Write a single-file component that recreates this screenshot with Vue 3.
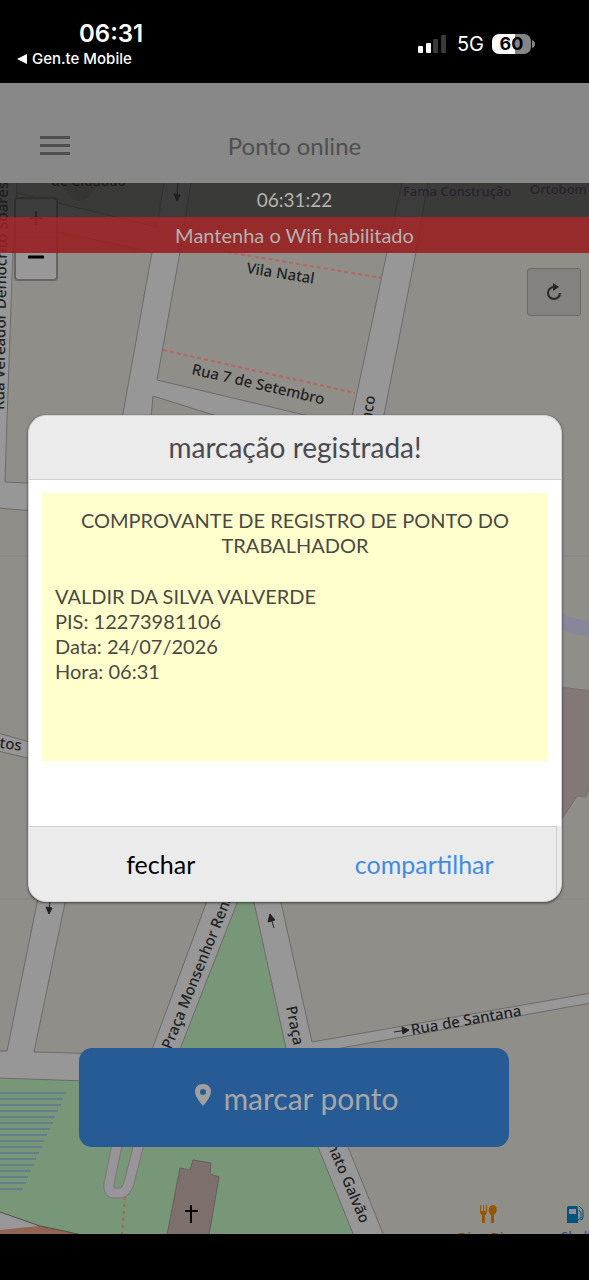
<template>
    <div class="phone">
        <header class="status">
            <div class="status-left">
                <span class="time">{{ data.time }}</span>
                <a class="back" href="#">
                    <svg width="10" height="10" viewBox="0 0 10 10"><path d="M0 5 L10 0 V10 Z" fill="#fff" /></svg>
                    Gen.te Mobile
                </a>
            </div>
            <div class="status-right">
                <svg width="28" height="20" viewBox="0 0 28 20">
                    <rect x="0" y="12" width="5" height="7" rx="1" fill="#fff" />
                    <rect x="8" y="9" width="5" height="10" rx="1" fill="#fff" />
                    <rect x="15" y="5" width="5" height="14" rx="1" fill="#3a3a3a" />
                    <rect x="23" y="1" width="5" height="18" rx="1" fill="#3a3a3a" />
                </svg>
                <span class="network">5G</span>
                <div class="battery">
                    <span class="level">60</span>
                    <svg width="3" height="8" viewBox="0 0 3 8"><path d="M0 0 Q3 1 3 4 T0 8 Z" fill="#858585" /></svg>
                </div>
            </div>
        </header>

        <main class="screen">
            <div class="navbar">
                <button class="menu" aria-label="Menu">
                    <span></span>
                    <span></span>
                    <span></span>
                </button>
                <h1>Ponto online</h1>
            </div>

            <div class="map-area">
                <svg class="map" viewBox="0 183 589 1051" preserveAspectRatio="xMidYMin slice">
                    <rect x="0" y="183" width="589" height="1051" fill="#908e88" />
                    <path d="M0 556 H589 M0 899 H589" stroke="#878580" fill="none" />

                    <!-- green areas -->
                    <path d="M235 900 H254 L286 1048 L353 1234 H0 V1078 L150 1082 L180 1048 Z" fill="#789778" />
                    <g stroke="#647f8c" stroke-width="2">
                        <line v-for="line in lakeLines" :key="line.y" x1="0" :y1="line.y" :x2="line.x" :y2="line.y" />
                    </g>

                    <!-- streets -->
                    <g fill="#979798" stroke="#6c6b6b" stroke-width="1">
                        <path d="M-2 182 H17 L13 250 L7 420 L5 482 L70 485 V514 L-2 508 Z" />
                        <path d="M17 193 L58 203 L157 227 L164 182 H191 L180 252 L157 380 L330 421 H233 L153 396 L150 430 H120 L152 252 L58 232 L15 224 Z" />
                        <path d="M402 182 H428 L416 252 L380 435 H348 L387 252 Z" />
                        <path d="M-2 733 L40 745 V761 L-2 751 Z" />
                        <path d="M38 898 H66 L34 1052 L150 1055 L208 898 H239 L175 1062 V1084 L-2 1078 V1051 H7 Z" />
                        <path d="M253 898 H280 L312 1042 L591 993 V1003 L330 1050 L318 1070 L348 1147 L384 1236 H354 L318 1147 L286 1048 Z" />
                    </g>
                    <path d="M555 619 Q575 628 595 630" stroke="#86879b" stroke-width="15" fill="none" />
                    <path d="M560 687 L591 691 V783 L586 797 L577 796 L560 822 Z" fill="#827875" stroke="#77706e" />
                    <path d="M60 183 H100 L90 196 Q82 204 72 199 Z" fill="#827c73" />

                    <g fill="none" stroke-linejoin="round">
                        <path d="M118 1140 L109 1184 Q108 1192 114 1193 L121 1193 Q126 1192 129 1183 L140 1140" stroke="#7b7775" stroke-width="11" />
                        <path d="M118 1140 L109 1184 Q108 1192 114 1193 L121 1193 Q126 1192 129 1183 L140 1140" stroke="#98949a" stroke-width="9" />
                        <path d="M125 1197 L122 1234" stroke="#9c6c50" stroke-width="2" stroke-dasharray="3 4" />
                        <path d="M227 252 L382 278 M163 350 L355 393" stroke="#b56564" stroke-width="2" stroke-dasharray="4 3" />
                    </g>
                    <path d="M0 1212 L40 1226 L0 1230 Z" fill="#98989a" />
                    <path d="M0 1230 L40 1226 L82 1235 H0 Z" fill="#946353" />
                    <path d="M0 1212 L40 1226 Q60 1230 82 1235" fill="none" stroke="#4d4d45" />
                    <path d="M180 1168 L190 1170 L193 1160 L211 1163 L210 1174 L219 1177 L209 1235 H167 Z" fill="#7d706c" stroke="#685d59" />
                    <path d="M191 1205 V1223 M185 1211 H198" stroke="#000" stroke-width="2" />

                    <!-- one way arrows -->
                    <g fill="#222" stroke="#222" stroke-width="1">
                        <path d="M178 183 L177 196 M174 194 L177 201 L180 195 Z" />
                        <path d="M50 902 L49 909 M46 907 L49 914 L52 908 Z" />
                        <path d="M274 928 L271 918 M268 922 L270 914 L275 920 Z" />
                        <path d="M394 1032 L407 1030 M402 1027 L409 1030 L403 1034 Z" />
                    </g>

                    <!-- labels -->
                    <g class="label">
                        <text
                            v-for="label in data.labels"
                            :key="label.text"
                            :class="label.type"
                            :transform="`translate(${label.x} ${label.y}) rotate(${label.angle})`"
                        >{{ label.text }}</text>
                    </g>

                    <!-- restaurant -->
                    <g transform="translate(480 1205)" fill="#945600">
                        <path d="M0 0 H1 V6 H3 V0 H4 V6 H6 V0 H7 V7 Q7 9 5 10 V18 H2 V10 Q0 9 0 7 Z" />
                        <path d="M13 0 C17 0 18 6 15 9 L14 10 V18 H11 V10 C7 7 9 0 13 0 Z" />
                    </g>
                    <!-- fuel -->
                    <g transform="translate(567 1205)">
                        <path d="M2 1 H9 Q11 1 11 3 V18 H0 V3 Q0 1 2 1 Z" fill="#00557e" />
                        <rect x="2" y="4" width="7" height="5" fill="#908e98" />
                        <path d="M11 15 L14 13 V8 L12 5 M12 1 L16 5 V12 Q16 15 13 15" fill="none" stroke="#00557e" stroke-width="1" />
                    </g>
                </svg>

                <div class="zoom-control">
                    <button aria-label="Aumentar zoom">
                        <svg width="14" height="14" viewBox="0 0 14 14"><path d="M0 7 H14 M7 0 V14" stroke="#444" stroke-width="2" /></svg>
                    </button>
                    <button aria-label="Diminuir zoom">
                        <svg width="16" height="4" viewBox="0 0 16 4"><path d="M1 2 H15" stroke="#000" stroke-width="3" stroke-linecap="round" /></svg>
                    </button>
                </div>

                <div class="clock">06:31:22</div>
                <div class="warning">Mantenha o Wifi habilitado</div>
                <button class="refresh" aria-label="Atualizar">
                    <svg width="16" height="18" viewBox="0 0 16 18">
                        <path d="M14 10 A6 6 0 1 1 8 4" fill="none" stroke="#272727" stroke-width="2" />
                        <path d="M7 0 L13 4 L7 8 Z" fill="#272727" />
                    </svg>
                </button>

                <button class="mark">
                    <svg width="16" height="22" viewBox="0 0 16 22">
                        <path fill-rule="evenodd" d="M8 0 C3 0 0 3 0 8 C0 13 8 22 8 22 C8 22 16 13 16 8 C16 3 13 0 8 0 Z M8 5 A3 3 0 1 1 8 11 A3 3 0 1 1 8 5 Z" fill="#a09fa0" />
                    </svg>
                    marcar ponto
                </button>
            </div>

            <div class="overlay" v-if="open">
                <div class="dialog" role="dialog" aria-labelledby="dialog-title">
                    <h2 id="dialog-title">marcação registrada!</h2>
                    <div class="dialog-body">
                        <div class="receipt">
                            <p class="receipt-title">COMPROVANTE DE REGISTRO DE PONTO DO TRABALHADOR</p>
                            <p>{{ data.receipt.name }}</p>
                            <p>PIS: {{ data.receipt.pis }}</p>
                            <p>Data: {{ data.receipt.date }}</p>
                            <p>Hora: {{ data.time }}</p>
                        </div>
                    </div>
                    <div class="dialog-footer">
                        <button @click="open = false">fechar</button>
                        <button class="share">compartilhar</button>
                    </div>
                </div>
            </div>
        </main>

        <footer class="home-bar"></footer>
    </div>
</template>

<script setup>
import { computed, reactive, ref } from 'vue';

const open = ref(true);

const data = reactive({
    time: '06:31',
    receipt: {
        name: 'VALDIR DA SILVA VALVERDE',
        pis: '12273981106',
        date: '24/07/2026',
    },
    labels: [
        { text: 'Vila Natal', x: 246, y: 273, angle: 9, type: 'street' },
        { text: 'Rua 7 de Setembro', x: 191, y: 374, angle: 13, type: 'street' },
        { text: 'Rua Vereador Demócrito Soares', x: 4, y: 410, angle: -89, type: 'street' },
        { text: 'Branco', x: 366, y: 446, angle: -79, type: 'street' },
        { text: 'Santos', x: -27, y: 744, angle: 8, type: 'street' },
        { text: 'Praça Monsenhor Renato', x: 171, y: 1050, angle: -68, type: 'street' },
        { text: 'Praça', x: 286, y: 1007, angle: 79, type: 'street' },
        { text: 'nato Galvão', x: 327, y: 1145, angle: 67, type: 'street' },
        { text: 'Rua de Santana', x: 412, y: 1035, angle: -10, type: 'street' },
        { text: 'Fama Construção', x: 403, y: 196, angle: 0, type: 'shop' },
        { text: 'Ortobom', x: 530, y: 194, angle: 0, type: 'shop' },
        { text: 'de Cidadão', x: 51, y: 186, angle: 0, type: 'place' },
        { text: 'Ding Ding', x: 458, y: 1242, angle: 0, type: 'food' },
        { text: 'Shell', x: 561, y: 1241, angle: 0, type: 'fuel' },
    ],
});

// the lake narrows towards the bottom
const lakeLines = computed(() => {
    const lines = [];
    for (let y = 1093; y <= 1191; y += 6) {
        lines.push({ y, x: Math.round(66 - (y - 1093) * 0.45) });
    }
    return lines;
});
</script>

<style>
body {
    margin: 0;
    background-color: #000;
}
</style>

<style scoped>
.phone {
    min-height: 100vh;
    display: flex;
    flex-direction: column;
    background-color: #000;
    font-family: Lato, "Open Sans", sans-serif;
}

button {
    border: none;
    padding: 0;
    background-color: transparent;
    font-family: inherit;
    cursor: pointer;
}

h1,
h2,
p {
    margin: 0;
    font-weight: 400;
}

.status {
    height: 83px;
    display: flex;
    justify-content: space-between;
    box-sizing: border-box;
    padding: 18px 54px 0 17px;
    color: #fff;
    font-family: Inter, sans-serif;
}

.status-left {
    display: flex;
    flex-direction: column;
}

.time {
    padding-left: 62px;
    font-size: 24px;
    line-height: 32px;
    font-weight: 600;
}

.back {
    display: flex;
    align-items: center;
    gap: 5px;
    color: #fff;
    font-size: 15px;
    line-height: 18px;
    font-weight: 500;
    text-decoration: none;
}

.status-right {
    display: flex;
    align-items: center;
    height: 52px;
}

.network {
    margin-left: 11px;
    font-size: 20px;
}

.battery {
    display: flex;
    align-items: center;
    gap: 1px;
    margin-left: 8px;
}

.level {
    width: 39px;
    height: 20px;
    border-radius: 7px;
    background: linear-gradient(to right, #fff 60%, #858585 60%);
    color: #000;
    font-size: 18px;
    line-height: 20px;
    font-weight: 700;
    text-align: center;
}

.screen {
    flex: 1;
    display: flex;
    flex-direction: column;
    position: relative;
}

.navbar {
    height: 100px;
    box-sizing: border-box;
    padding: 24px 40px 0;
    display: grid;
    grid-template-columns: 30px 1fr 30px;
    align-items: center;
    background-color: #888;
}

.menu {
    display: flex;
    flex-direction: column;
    gap: 5px;
}

.menu span {
    width: 30px;
    height: 3px;
    background-color: #4f4f4f;
}

h1 {
    color: #4f4f4f;
    font-size: 24px;
    text-align: center;
}

.map-area {
    flex: 1;
    display: flex;
    flex-direction: column;
    position: relative;
    overflow: hidden;
}

.map {
    position: absolute;
    inset: 0;
    width: 100%;
    height: 100%;
}

.label {
    font-family: "Noto Sans", sans-serif;
    font-size: 14px;
    font-weight: 500;
    fill: #222;
}

.street {
    font-size: 15px;
}

.shop {
    fill: #5e2b68;
    font-size: 13px;
}

.food {
    fill: #7d4c10;
    font-size: 13px;
}

.fuel {
    fill: #3d4a8c;
    font-size: 13px;
}

.zoom-control {
    position: absolute;
    top: 14px;
    left: 14px;
    display: flex;
    flex-direction: column;
    padding-bottom: 4px;
    border: 2px solid #666563;
    border-radius: 4px;
    background-color: #989898;
}

.zoom-control button {
    display: flex;
    align-items: center;
    justify-content: center;
    width: 40px;
    height: 38px;
}

.zoom-control button + button {
    border-top: 1px solid #777;
}

.clock,
.warning {
    position: relative;
    color: #b3b3b1;
    font-size: 20px;
    text-align: center;
}

.clock {
    font-size: 19px;
    line-height: 34px;
    background-color: rgba(30, 30, 30, 0.75);
}

.warning {
    line-height: 36px;
    background-color: rgba(152, 31, 33, 0.9);
}

.refresh {
    position: relative;
    align-self: flex-end;
    display: flex;
    align-items: center;
    justify-content: center;
    width: 54px;
    height: 48px;
    margin: 15px 8px 0 0;
    border: 1px solid #6d6c6a;
    border-radius: 3px;
    background-color: #83827f;
}

.mark {
    position: relative;
    display: flex;
    align-items: center;
    justify-content: center;
    gap: 12px;
    height: 99px;
    margin: auto 80px 87px 79px;
    padding-left: 6px;
    border-radius: 13px;
    background-color: #275b96;
    color: #a6a6a8;
    font-size: 30px;
}

.mark svg {
    margin-bottom: 6px;
}

.overlay {
    position: absolute;
    inset: 0;
    display: flex;
    align-items: center;
    justify-content: center;
    padding: 0 27px 0 28px;
}

.dialog {
    flex: 1;
    overflow: hidden;
    border: 1px solid #d5d5d5;
    border-radius: 18px;
    background-color: #ebebeb;
    box-shadow: 0 1px 3px rgba(0, 0, 0, 0.6);
}

h2 {
    border-bottom: 1px solid #cfcfcf;
    color: #4a4a50;
    font-size: 28px;
    line-height: 63px;
    text-align: center;
}

.dialog-body {
    padding: 13px 13px 65px;
    background-color: #fff;
}

.receipt {
    min-height: 268px;
    box-sizing: border-box;
    padding: 15px 13px;
    background-color: #ffffcd;
    color: #4a4a42;
    font-size: 20px;
    line-height: 25px;
}

.receipt-title {
    margin-bottom: 26px;
    text-align: center;
}

.dialog-footer {
    display: flex;
    margin-right: 4px;
    border-top: 1px solid #cfcfcf;
    border-right: 1px solid #cfcfcf;
}

.dialog-footer button {
    flex: 1;
    height: 74px;
    color: #000;
    font-size: 25px;
}

.dialog-footer .share {
    color: #428be0;
}

.home-bar {
    height: 46px;
}
</style>
